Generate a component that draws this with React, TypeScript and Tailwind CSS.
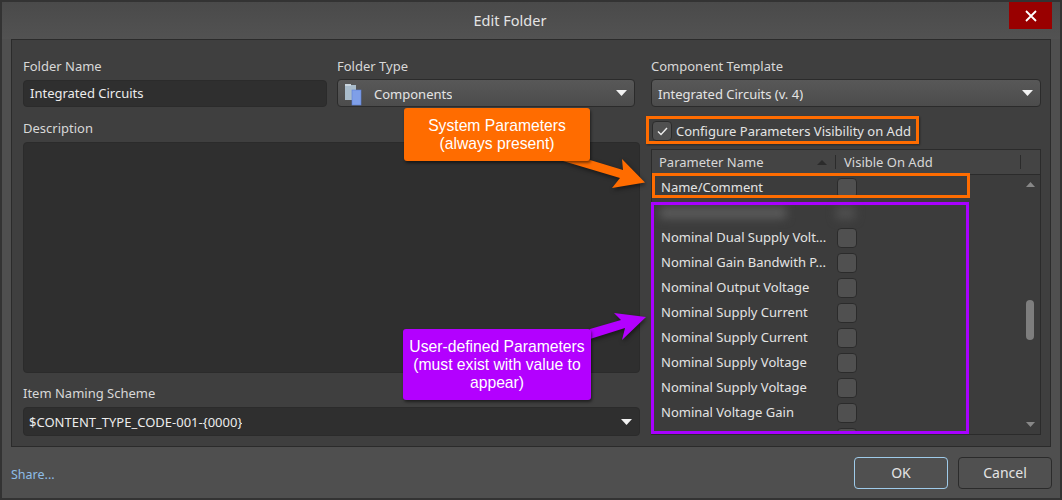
import React from "react";

const rows = [
  "Nominal Dual Supply Volt...",
  "Nominal Gain Bandwith P...",
  "Nominal Output Voltage",
  "Nominal Supply Current",
  "Nominal Supply Current",
  "Nominal Supply Voltage",
  "Nominal Supply Voltage",
  "Nominal Voltage Gain",
];

const Caret = () => (
  <svg width="11" height="6" viewBox="0 0 11 6" className="shrink-0">
    <path d="M0 0H11L5.5 6Z" fill="#f2f2f2" />
  </svg>
);

const Combo = ({ children, dark }: { children: React.ReactNode; dark?: boolean }) => (
  <div
    className={
      "flex items-center justify-between rounded-[4px] border border-[#2b2b2b] pr-[7px] " +
      (dark ? "h-[29px] bg-[#2f2f2f] pl-[5px]" : "h-[28px] bg-gradient-to-b from-[#585858] to-[#4c4c4c] pl-[6px]")
    }
  >
    <div className={"flex items-center truncate leading-[18px] " + (dark ? "" : "pt-[2px]")}>{children}</div>
    <Caret />
  </div>
);

const Check = ({ children }: { children?: React.ReactNode }) => (
  <div className="flex h-[20px] w-[20px] shrink-0 items-center justify-center rounded-[4px] border border-[#2b2b2b] bg-[#505050]">
    {children}
  </div>
);

const Row = ({ name }: { name: string }) => (
  <div className="flex h-[25px] items-center">
    <div className="mb-[2px] w-[177px] truncate pl-[1px] leading-[18px]">{name}</div>
    <Check />
  </div>
);

export default function App() {
  return (
    <div className="relative h-[500px] w-[1062px] overflow-hidden border-2 border-[#333333] bg-[#4f4f4f] text-[13px] leading-none text-[#e4e4e4] [font-family:'Noto_Sans',sans-serif]">
      {/* title bar */}
      <div className="relative flex h-[37px] items-center justify-center bg-gradient-to-b from-[#4a4a4a] to-[#525252] pb-[1px] pr-[42px] text-[14.5px]">
        Edit Folder
        <div className="absolute right-[8px] top-0 flex h-[27px] w-[43px] items-center justify-center bg-[#990000]">
          <svg width="12" height="12" viewBox="0 0 12 12">
            <path d="M1 1L11 11M11 1L1 11" stroke="#fff" strokeWidth="1.8" />
          </svg>
        </div>
      </div>

      {/* main panel */}
      <div className="mx-[9px] flex h-[408px] gap-[11px] border border-[#2b2b2b] bg-[#3f3f3f] pl-[11px] pr-[9px] pt-[20px]">
        <div className="flex w-[617px] flex-col">
          <div className="flex gap-[10px]">
            <div className="w-[304px]">
              <div className="mb-[6px] h-[14px] text-[#d8d8d8]">Folder Name</div>
              <div className="flex h-[27px] items-center rounded-[4px] border border-[#2b2b2b] bg-[#2f2f2f] pl-[6px] text-[#ececec]">
                Integrated Circuits
              </div>
            </div>
            <div className="w-[298px]">
              <div className="mb-[5px] h-[14px] text-[#d8d8d8]">Folder Type</div>
              <Combo>
                <svg width="19" height="24" viewBox="0 0 19 24" className="mr-[11px] shrink-0">
                  <rect x="1" y="3" width="11" height="15" fill="#a9bccb" />
                  <rect x="1" y="2" width="6" height="2" fill="#c9d5de" />
                  <rect x="12" y="8" width="5" height="12" fill="#7d8a96" />
                  <rect x="8" y="8" width="9" height="15" fill="#7f9fe8" stroke="#5a7fd8" strokeWidth="0.6" />
                </svg>
                Components
              </Combo>
            </div>
          </div>
          <div className="mb-[6px] mt-[15px] h-[14px] text-[#d8d8d8]">Description</div>
          <div className="h-[231px] rounded-[4px] border border-[#2b2b2b] bg-[#2f2f2f]" />
          <div className="mb-[6px] mt-[14px] h-[14px] text-[#d8d8d8]">Item Naming Scheme</div>
          <Combo dark>
            <span className="text-[#ececec]">$CONTENT_TYPE_CODE-001-{"{0000}"}</span>
          </Combo>
        </div>

        <div className="flex w-[390px] flex-col">
          <div className="mb-[5px] h-[14px] text-[#d8d8d8]">Component Template</div>
          <Combo>Integrated Circuits (v. 4)</Combo>
          <div className="mb-[8px] mt-[14px] flex h-[20px] items-center gap-[4px] pl-[1px]">
            <Check>
              <svg width="11" height="9" viewBox="0 0 11 9">
                <path d="M1 4.5L4 7.5L10 1" fill="none" stroke="#ededed" strokeWidth="1.4" />
              </svg>
            </Check>
            Configure Parameters Visibility on Add
          </div>
          {/* parameter table */}
          <div className="flex h-[286px] flex-col overflow-hidden border border-[#2b2b2b] bg-[#3c3c3c]">
            <div className="flex h-[25px] shrink-0 items-center border-b border-[#2b2b2b] bg-[#444444] pl-[7px] text-[#d8d8d8]">
              <div className="flex w-[176px] items-center justify-between pr-[8px]">
                Parameter Name
                <svg width="10" height="5" viewBox="0 0 10 5"><path d="M0 5H10L5 0Z" fill="#2b2b2b" /></svg>
              </div>
              <div className="h-[14px] w-[185px] border-l border-[#2b2b2b] pl-[8px] leading-[14px]">Visible On Add</div>
              <div className="h-[14px] border-l border-[#2b2b2b]" />
            </div>
            <div className="flex min-h-0 flex-1">
              <div className="min-w-0 flex-1 overflow-hidden pl-[8px]">
                <Row name="Name/Comment" />
                <div className="flex h-[25px] items-center blur-[5px]">
                  <div className="h-[10px] w-[126px] bg-[#5f5f5f]" />
                  <div className="ml-[50px] h-[12px] w-[19px] bg-[#505050]" />
                </div>
                {rows.map((r, i) => (
                  <Row key={i} name={r} />
                ))}
                <Row name="" />
              </div>
              <div className="mr-[2px] flex w-[16px] shrink-0 flex-col items-center pb-[7px] pt-[7px]">
                <svg width="9" height="5" viewBox="0 0 9 5"><path d="M0 5H9L4.5 0Z" fill="#888888" /></svg>
                <div className="mt-[113px] h-[40px] w-[8px] rounded-[4px] bg-[#7e7e7e]" />
                <svg width="9" height="5" viewBox="0 0 9 5" className="mt-auto"><path d="M0 0H9L4.5 5Z" fill="#888888" /></svg>
              </div>
            </div>
          </div>
        </div>
      </div>

      {/* footer */}
      <div className="flex h-[51px] items-center justify-between pl-[9px] pr-[8px]">
        <span className="pt-[5px] text-[12.5px] text-[#8ebde6]">Share...</span>
        <div className="flex gap-[10px]">
          <div className="flex h-[32px] w-[94px] items-center justify-center rounded-[4px] border border-[#9fcbea] bg-[#505050] text-[14px]">OK</div>
          <div className="flex h-[32px] w-[94px] items-center justify-center rounded-[4px] border border-[#2b2b2b] bg-[#505050] text-[14px]">Cancel</div>
        </div>
      </div>

      {/* annotations drawn over the dialog */}
      <svg className="pointer-events-none absolute -left-[2px] -top-[2px] drop-shadow-[1px_2px_2px_rgba(0,0,0,0.5)]" width="1062" height="500" viewBox="0 0 1062 500">
        <path d="M563 161L620 178L612 188L645 182.5L622 159L623 170L590 160Z" fill="#ff6c00" />
        <path d="M590 329L621 320L614 313L646 317L622 340L625 328L590 339Z" fill="#b300ff" />
      </svg>
      <div className="absolute left-[402px] top-[106px] flex h-[53px] w-[186px] flex-col items-center justify-center rounded-[3px] bg-[#ff6c00] text-[15.7px] leading-[18px] text-white shadow-[1px_2px_3px_rgba(0,0,0,0.5)] [font-family:'Liberation_Sans',sans-serif]">
        <div>System Parameters</div>
        <div>(always present)</div>
      </div>
      <div className="absolute left-[401px] top-[327px] flex h-[71px] w-[188px] flex-col items-center justify-center rounded-[3px] bg-[#b300ff] text-[15.7px] leading-[18px] text-white shadow-[1px_2px_3px_rgba(0,0,0,0.5)] [font-family:'Liberation_Sans',sans-serif]">
        <div>User-defined Parameters</div>
        <div>(must exist with value to</div>
        <div>appear)</div>
      </div>
      <div className="absolute left-[644px] top-[114px] h-[28px] w-[273px] border-[3px] border-[#ff6c00] shadow-[1px_1px_2px_rgba(0,0,0,0.4)]" />
      <div className="absolute left-[650px] top-[171px] h-[25px] w-[318px] border-[3px] border-[#ff6c00]" />
      <div className="absolute left-[649px] top-[200px] h-[232px] w-[318px] border-[3px] border-[#a800ff]" />
    </div>
  );
}
